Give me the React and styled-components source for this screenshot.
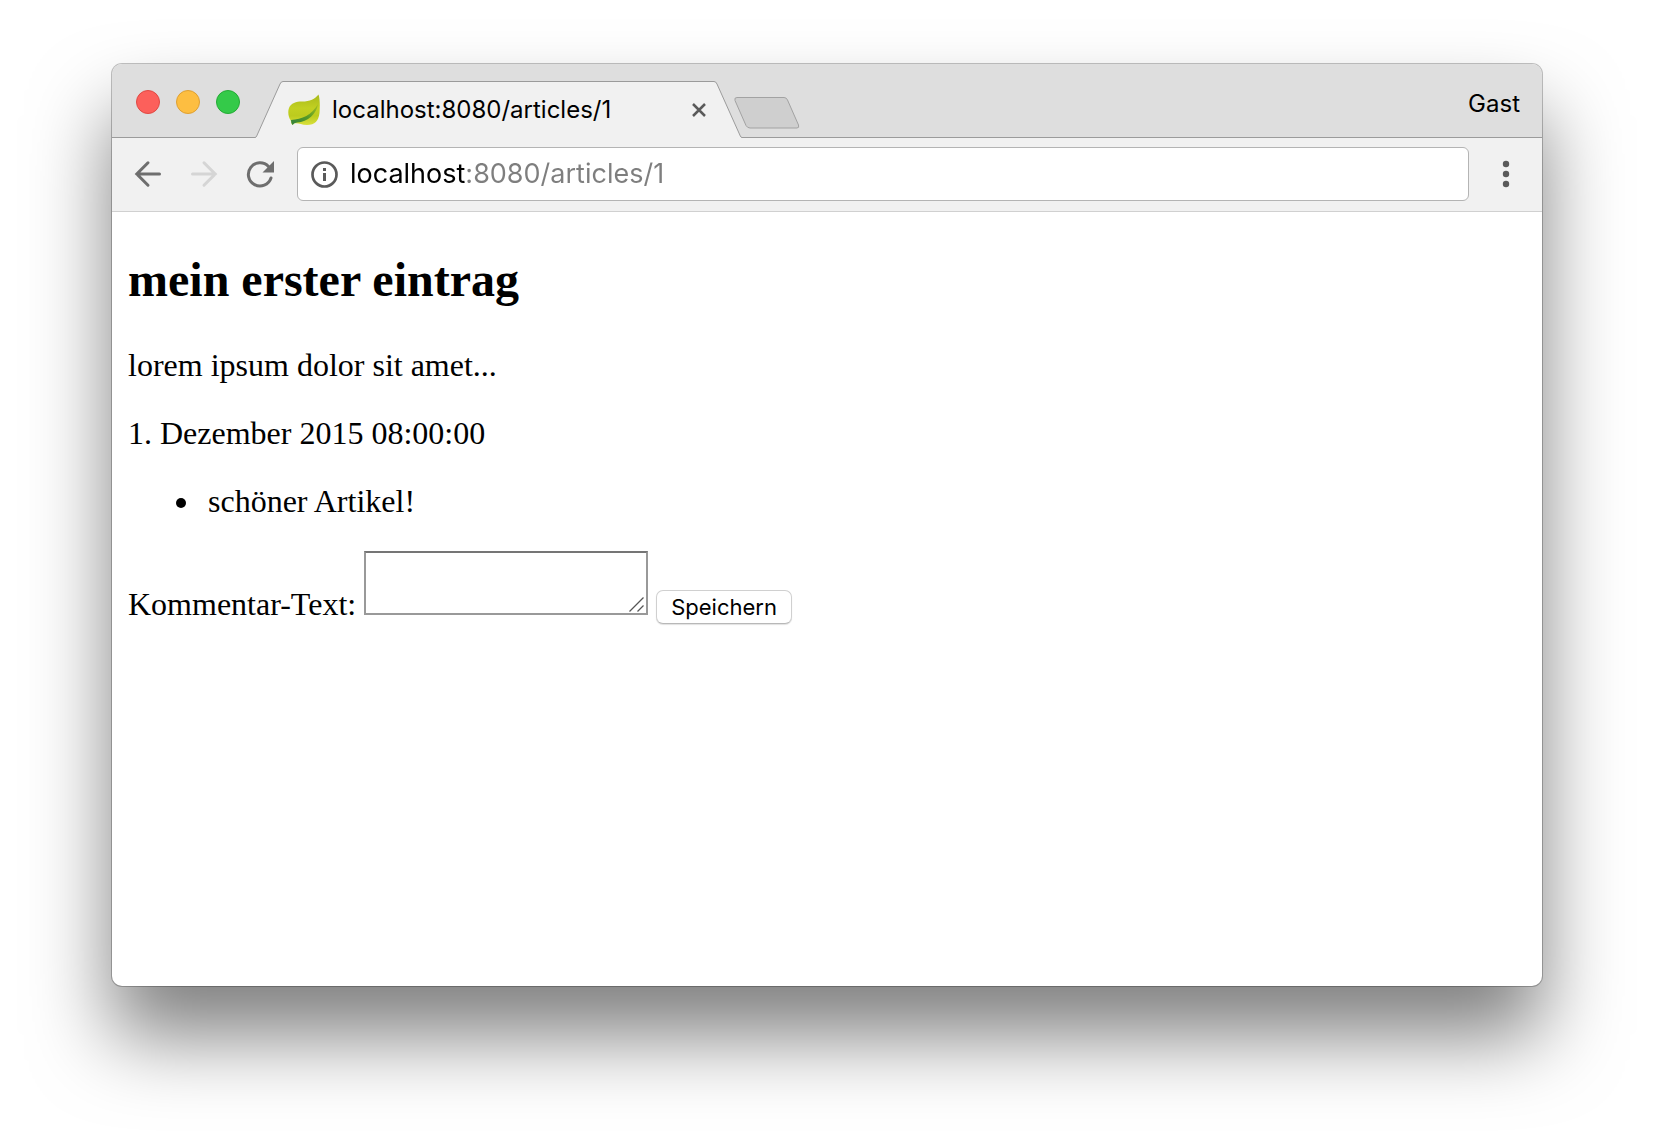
import React from 'react'
import styled, { createGlobalStyle } from 'styled-components'

const GlobalStyle = createGlobalStyle`
  *, *::before, *::after {
    box-sizing: border-box;
  }

  body {
    margin: 0;
    background: #fff;
  }
`

const Desktop = styled.div`
  display: flex;
  flex-direction: column;
  min-height: 100vh;
  padding: 64px 112px 160px;
  overflow: hidden;
`

const BrowserWindow = styled.div`
  flex: 1;
  display: flex;
  flex-direction: column;
  background: #fff;
  border-radius: 10px;
  box-shadow: 0 0 0 1px rgba(0, 0, 0, 0.24), 0 50px 80px rgba(0, 0, 0, 0.5);
`

const TitleBar = styled.header`
  display: flex;
  align-items: flex-end;
  height: 74px;
  background: #dedede;
  border-radius: 10px 10px 0 0;
  box-shadow: inset 0 -1px #9b9b9b;
  font-family: Inter, sans-serif;
  font-size: 24px;
  line-height: 28px;
  color: #000;
`

const PlainButton = styled.button`
  display: flex;
  align-items: center;
  justify-content: center;
  padding: 0;
  border: 0;
  background: none;
`

const Lights = styled.div`
  display: flex;
  align-self: center;
  gap: 16px;
  padding: 2px 15px 0 24px;
`

const Light = styled.button`
  width: 24px;
  height: 24px;
  padding: 0;
  border: 1px solid ${props => props.$border};
  border-radius: 50%;
  background: ${props => props.$fill};
`

const TabEdge = styled.svg`
  display: block;
  width: 28px;
  height: 57px;
`

const Tab = styled.div`
  display: flex;
  height: 57px;
`

const TabBody = styled.div`
  display: flex;
  align-items: center;
  gap: 12px;
  width: 431px;
  padding: 0 8px 0 5px;
  border-top: 1px solid #9b9b9b;
  background: #f1f1f1;
`

const TabTitle = styled.span`
  flex: 1;
  white-space: nowrap;
`

const NewTab = styled(PlainButton)`
  margin: 0 0 9px -8px;
`

const Profile = styled(PlainButton)`
  align-self: center;
  margin-left: auto;
  padding: 6px 22px 0 0;
  font: inherit;
  color: inherit;
`

const Toolbar = styled.nav`
  display: flex;
  align-items: center;
  height: 74px;
  padding: 0 0 2px 8px;
  background: #f1f1f1;
  border-bottom: 1px solid #d0d0d0;
`

const ToolButton = styled(PlainButton)`
  width: 56px;
  height: 56px;
`

const MenuButton = styled(PlainButton)`
  width: 73px;
  height: 56px;
`

const AddressBar = styled.label`
  flex: 1;
  display: flex;
  align-items: center;
  gap: 12px;
  height: 54px;
  margin-left: 9px;
  padding: 0 12px;
  background: #fff;
  border: 1px solid #b4b4b4;
  border-radius: 6px;
`

/* host part is black, the rest of the address is grey */
const Address = styled.input`
  flex: 1;
  min-width: 0;
  height: 36px;
  padding: 0;
  border: 0;
  outline: 0;
  font-family: Inter, sans-serif;
  font-size: 27px;
  color: transparent;
  background: linear-gradient(to right, #000 116px, #7e7e7e 116px);
  background-clip: text;
  -webkit-background-clip: text;
`

const Page = styled.main`
  padding: 0 16px;
  font-family: 'Liberation Serif', serif;
  font-size: 32px;
  line-height: 36px;
  color: #000;
`

const Headline = styled.h2`
  margin: 40px 0;
  font-size: 48px;
  line-height: 55px;
`

const Paragraph = styled.p`
  margin: 32px 0;
`

const Comments = styled.ul`
  margin: 32px 0;
  padding-left: 48px;
  list-style: none;
`

const Comment = styled.li`
  display: flex;
  align-items: center;
  gap: 22px;

  &::before {
    content: '';
    width: 10px;
    height: 10px;
    margin-top: 4px;
    border-radius: 50%;
    background: #000;
  }
`

const TextBox = styled.span`
  display: inline-block;
  position: relative;
  line-height: 0;
`

const CommentText = styled.textarea`
  width: 284px;
  height: 64px;
  padding: 4px;
  border: 2px solid #999;
  border-top-color: #757575;
  border-radius: 0;
  outline: 0;
  resize: none;
  font-family: 'Liberation Mono', monospace;
  font-size: 22px;
  line-height: 26px;
`

const Grip = styled.svg`
  position: absolute;
  right: 4px;
  bottom: 3px;
  pointer-events: none;
`

const SaveButton = styled.button`
  height: 34px;
  padding: 0 14px;
  border: 1px solid #d0d0d0;
  border-bottom-color: #b8b8b8;
  border-radius: 7px;
  background: #fff;
  box-shadow: 0 1px 1px rgba(0, 0, 0, 0.12);
  font-family: Inter, sans-serif;
  font-size: 22px;
  line-height: 28px;
  color: #000;
`

const lights = [
  { label: 'Schließen', fill: '#fc605b', border: '#e04943' },
  { label: 'Minimieren', fill: '#fdbe41', border: '#dfa032' },
  { label: 'Maximieren', fill: '#34ca49', border: '#24ab35' }
]

const LeafIcon = () => (
  <svg width="32" height="32" viewBox="0 0 32 32" aria-hidden="true">
    <defs>
      <linearGradient id="leaf" x1="0" y1="0" x2="0" y2="1">
        <stop offset="0" stopColor="#a9ba1c" />
        <stop offset="0.45" stopColor="#c2d021" />
        <stop offset="0.7" stopColor="#bccb1e" />
        <stop offset="1" stopColor="#d8e03c" />
      </linearGradient>
      <linearGradient id="vein" x1="0" y1="1" x2="1" y2="0">
        <stop offset="0" stopColor="#2f8040" />
        <stop offset="0.5" stopColor="#559a27" />
        <stop offset="1" stopColor="#a8bf20" />
      </linearGradient>
    </defs>
    <path
      d="M30.500 0.500C32 5 32 12 31.500 19C30.500 27 27 31 19 31C13 31 10 28.500 6 29.500L4.500 31C3 30 3.500 28 2.500 26C0.500 23 -0.500 18 1 14C3 9 8 7.500 14 7.500C22 7.500 27 5 30.500 0.500Z"
      fill="url(#leaf)"
    />
    <path
      d="M3 26C14 25.500 24 21 30 10C28.500 20 20 28 9 28.500Q6 28.500 4.500 31Q3 29 3 26Z"
      fill="url(#vein)"
    />
  </svg>
)

const ArrowIcon = ({ color, flip }) => (
  <svg width="28" height="28" viewBox="0 0 28 28" aria-hidden="true">
    <path
      d="M25.500 14H3M14 2.800L2.800 14L14 25.200"
      transform={flip ? 'matrix(-1 0 0 1 28 0)' : undefined}
      fill="none"
      stroke={color}
      strokeWidth="3"
      strokeLinecap="round"
      strokeLinejoin="miter"
    />
  </svg>
)

const ReloadIcon = () => (
  <svg width="28" height="28" viewBox="0 0 28 28" aria-hidden="true">
    <path
      d="M25 18A11.600 11.600 0 1 1 22.500 6.500"
      fill="none"
      stroke="#6e6e6e"
      strokeWidth="3"
      strokeLinecap="round"
    />
    <path d="M28 1V12.500H16.500Z" fill="#6e6e6e" />
  </svg>
)

const InfoIcon = () => (
  <svg width="28" height="28" viewBox="0 0 28 28" aria-hidden="true">
    <circle cx="14.500" cy="14.500" r="12" fill="none" stroke="#5a5a5a" strokeWidth="2.700" />
    <path d="M13 8h3v3h-3zM13 13h3v8h-3z" fill="#5a5a5a" />
  </svg>
)

const App = () => (
  <>
    <GlobalStyle />
    <Desktop>
      <BrowserWindow>
        <TitleBar>
          <Lights>
            {lights.map(light => (
              <Light
                key={light.label}
                type="button"
                aria-label={light.label}
                $fill={light.fill}
                $border={light.border}
              />
            ))}
          </Lights>
          <Tab>
            <TabEdge viewBox="0 0 28 57" aria-hidden="true">
              <path d="M0 57L1.500 55L25 3Q26 0.500 28 0.500V57Z" fill="#f1f1f1" />
              <path d="M0 56.500Q1 56.500 1.700 55L25 3Q26 0.500 28 0.500" fill="none" stroke="#9b9b9b" />
            </TabEdge>
            <TabBody>
              <LeafIcon />
              <TabTitle>localhost:8080/articles/1</TabTitle>
              <PlainButton type="button" aria-label="Tab schließen">
                <svg width="14" height="14" viewBox="0 0 14 14" aria-hidden="true">
                  <path d="M1 1L13 13M13 1L1 13" stroke="#5a5a5a" strokeWidth="2.500" />
                </svg>
              </PlainButton>
            </TabBody>
            <TabEdge viewBox="0 0 28 57" aria-hidden="true">
              <path d="M28 57L26.500 55L3 3Q2 0.500 0 0.500V57Z" fill="#f1f1f1" />
              <path d="M28 56.500Q27 56.500 26.300 55L3 3Q2 0.500 0 0.500" fill="none" stroke="#9b9b9b" />
            </TabEdge>
          </Tab>
          <NewTab type="button" aria-label="Neuer Tab">
            <svg width="66" height="32" viewBox="0 0 66 32" aria-hidden="true">
              <path
                d="M3 0.500H50Q52.500 0.500 53.500 3L64.500 28Q65.500 31 63 31H16Q13.500 31 12 28.500L1 3.500Q0 0.500 3 0.500Z"
                fill="#cfcfcf"
                stroke="#a2a2a2"
              />
            </svg>
          </NewTab>
          <Profile type="button">Gast</Profile>
        </TitleBar>
        <Toolbar>
          <ToolButton type="button" aria-label="Zurück">
            <ArrowIcon color="#6e6e6e" />
          </ToolButton>
          <ToolButton type="button" aria-label="Vorwärts">
            <ArrowIcon color="#d5d5d5" flip />
          </ToolButton>
          <ToolButton type="button" aria-label="Neu laden">
            <ReloadIcon />
          </ToolButton>
          <AddressBar>
            <InfoIcon />
            <Address aria-label="Adresse" defaultValue="localhost:8080/articles/1" spellCheck={false} />
          </AddressBar>
          <MenuButton type="button" aria-label="Menü">
            <svg width="8" height="28" viewBox="0 0 8 28" fill="#5a5a5a" aria-hidden="true">
              <circle cx="4" cy="4" r="3.200" />
              <circle cx="4" cy="14" r="3.200" />
              <circle cx="4" cy="24" r="3.200" />
            </svg>
          </MenuButton>
        </Toolbar>
        <Page>
          <Headline>mein erster eintrag</Headline>
          <Paragraph>lorem ipsum dolor sit amet...</Paragraph>
          <Paragraph>1. Dezember 2015 08:00:00</Paragraph>
          <Comments>
            <Comment>schöner Artikel!</Comment>
          </Comments>
          <form onSubmit={e => e.preventDefault()}>
            <label htmlFor="text">Kommentar-Text:</label>{' '}
            <TextBox>
              <CommentText id="text" name="text" />
              <Grip width="15" height="15" viewBox="0 0 15 15" aria-hidden="true">
                <path d="M0.500 14.500L14.500 0.500M8.500 14.500L14.500 8.500" stroke="#555" strokeWidth="1.300" />
              </Grip>
            </TextBox>{' '}
            <SaveButton type="submit">Speichern</SaveButton>
          </form>
        </Page>
      </BrowserWindow>
    </Desktop>
  </>
)

export default App
